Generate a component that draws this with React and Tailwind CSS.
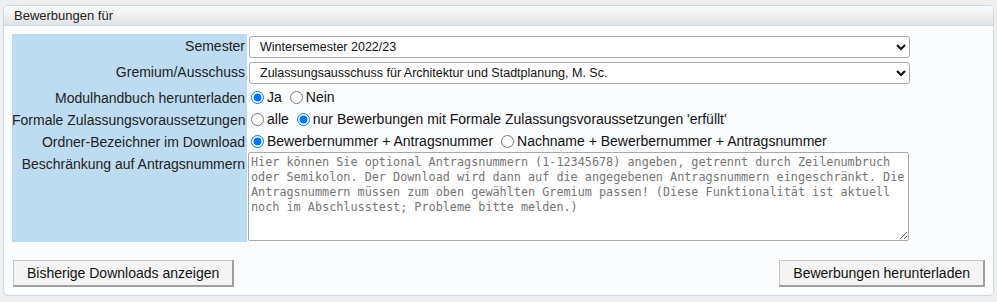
import React, { useState } from 'react';

const hint =
  'Hier können Sie optional Antragsnummern (1-12345678) angeben, getrennt durch Zeilenumbruch oder Semikolon. Der Download wird dann auf die angegebenen Antragsnummern eingeschränkt. Die Antragsnummern müssen zum oben gewählten Gremium passen! (Diese Funktionalität ist aktuell noch im Abschlusstest; Probleme bitte melden.)';

function Label({ children }) {
  return (
    <div className="bg-[#bedcf1] pr-[2px] pt-[4px] text-right text-[14px] leading-[16px] whitespace-nowrap text-[#222]">
      {children}
    </div>
  );
}

function Radio({ name, value, checked, onChange, children, first }) {
  return (
    <label className={`flex items-center ${first ? '' : 'ml-[4px]'}`}>
      <input
        type="radio"
        name={name}
        value={value}
        checked={checked}
        onChange={() => onChange(value)}
        className="m-0 ml-[4px] mr-[3px] h-[13px] w-[13px]"
      />
      {children}
    </label>
  );
}

export default function App() {
  const [modul, setModul] = useState('ja');
  const [formal, setFormal] = useState('erfuellt');
  const [ordner, setOrdner] = useState('nummer');

  return (
    <div className="min-h-[302px] bg-[#efefef] px-[3px] pt-[5px] font-['Liberation_Sans',Arial,sans-serif] text-[#222]">
      <div className="overflow-hidden rounded-[5px] border border-[#c5dbec] bg-[#fbfcfe]">
        {/* Kopfzeile */}
        <div className="flex h-[20px] items-center border-b border-[#c5dbec] bg-linear-to-b from-[#fcfcfc] to-[#e2e2e2] pl-[10px] text-[13px] text-[#222]">
          Bewerbungen für
        </div>

        <div className="px-[8px] pt-[8px] pb-[8px]">
          <div className="grid w-[900px] grid-cols-[235px_1fr]">
            <Label>Semester</Label>
            <div className="py-[2px] pl-[2px] pr-[2px]">
              <select className="block h-[22px] w-full rounded-[3px] border border-[#a9a9a9] bg-white pl-[6px] text-[12.5px] text-[#111]">
                <option>Wintersemester 2022/23</option>
              </select>
            </div>

            <Label>Gremium/Ausschuss</Label>
            <div className="py-[2px] pl-[2px] pr-[2px]">
              <select className="block h-[22px] w-full rounded-[3px] border border-[#a9a9a9] bg-white pl-[6px] text-[12.5px] text-[#111]">
                <option>Zulassungsausschuss für Architektur und Stadtplanung, M. Sc.</option>
              </select>
            </div>

            <Label>Modulhandbuch herunterladen</Label>
            <div className="flex h-[22px] items-center text-[14px] text-[#111]">
              <Radio name="modul" value="ja" checked={modul === 'ja'} onChange={setModul} first>
                Ja
              </Radio>
              <Radio name="modul" value="nein" checked={modul === 'nein'} onChange={setModul}>
                Nein
              </Radio>
            </div>

            <Label>Formale Zulassungsvoraussetzungen</Label>
            <div className="flex h-[22px] items-center text-[14px] text-[#111]">
              <Radio name="formal" value="alle" checked={formal === 'alle'} onChange={setFormal} first>
                alle
              </Radio>
              <Radio name="formal" value="erfuellt" checked={formal === 'erfuellt'} onChange={setFormal}>
                nur Bewerbungen mit Formale Zulassungsvoraussetzungen 'erfüllt'
              </Radio>
            </div>

            <Label>Ordner-Bezeichner im Download</Label>
            <div className="flex h-[22px] items-center text-[14px] text-[#111]">
              <Radio name="ordner" value="nummer" checked={ordner === 'nummer'} onChange={setOrdner} first>
                Bewerbernummer + Antragsnummer
              </Radio>
              <Radio name="ordner" value="name" checked={ordner === 'name'} onChange={setOrdner}>
                Nachname + Bewerbernummer + Antragsnummer
              </Radio>
            </div>

            <Label>Beschränkung auf Antragsnummern</Label>
            <div className="pl-[1px] pb-[1px]">
              <textarea
                placeholder={hint}
                className="block h-[89px] w-[661px] rounded-[2px] border border-[#a9a9a9] bg-white pl-[2px] pr-0 py-[2px] font-['DejaVu_Sans_Mono',monospace] text-[11.8px] leading-[15px] text-[#222] placeholder:text-[#757575]"
              />
            </div>
          </div>

          <div className="mt-[18px] flex justify-between pl-[1px]">
            <button className="h-[27px] border border-[#c4c4c4] border-r-2 border-b-2 border-r-[#a0a0a0] border-b-[#a0a0a0] bg-[#f4f4f4] px-[13px] text-[14px] text-[#111]">
              Bisherige Downloads anzeigen
            </button>
            <button className="h-[27px] border border-[#c4c4c4] border-r-2 border-b-2 border-r-[#a0a0a0] border-b-[#a0a0a0] bg-[#f4f4f4] px-[13px] text-[14px] text-[#111]">
              Bewerbungen herunterladen
            </button>
          </div>
        </div>
      </div>
    </div>
  );
}
